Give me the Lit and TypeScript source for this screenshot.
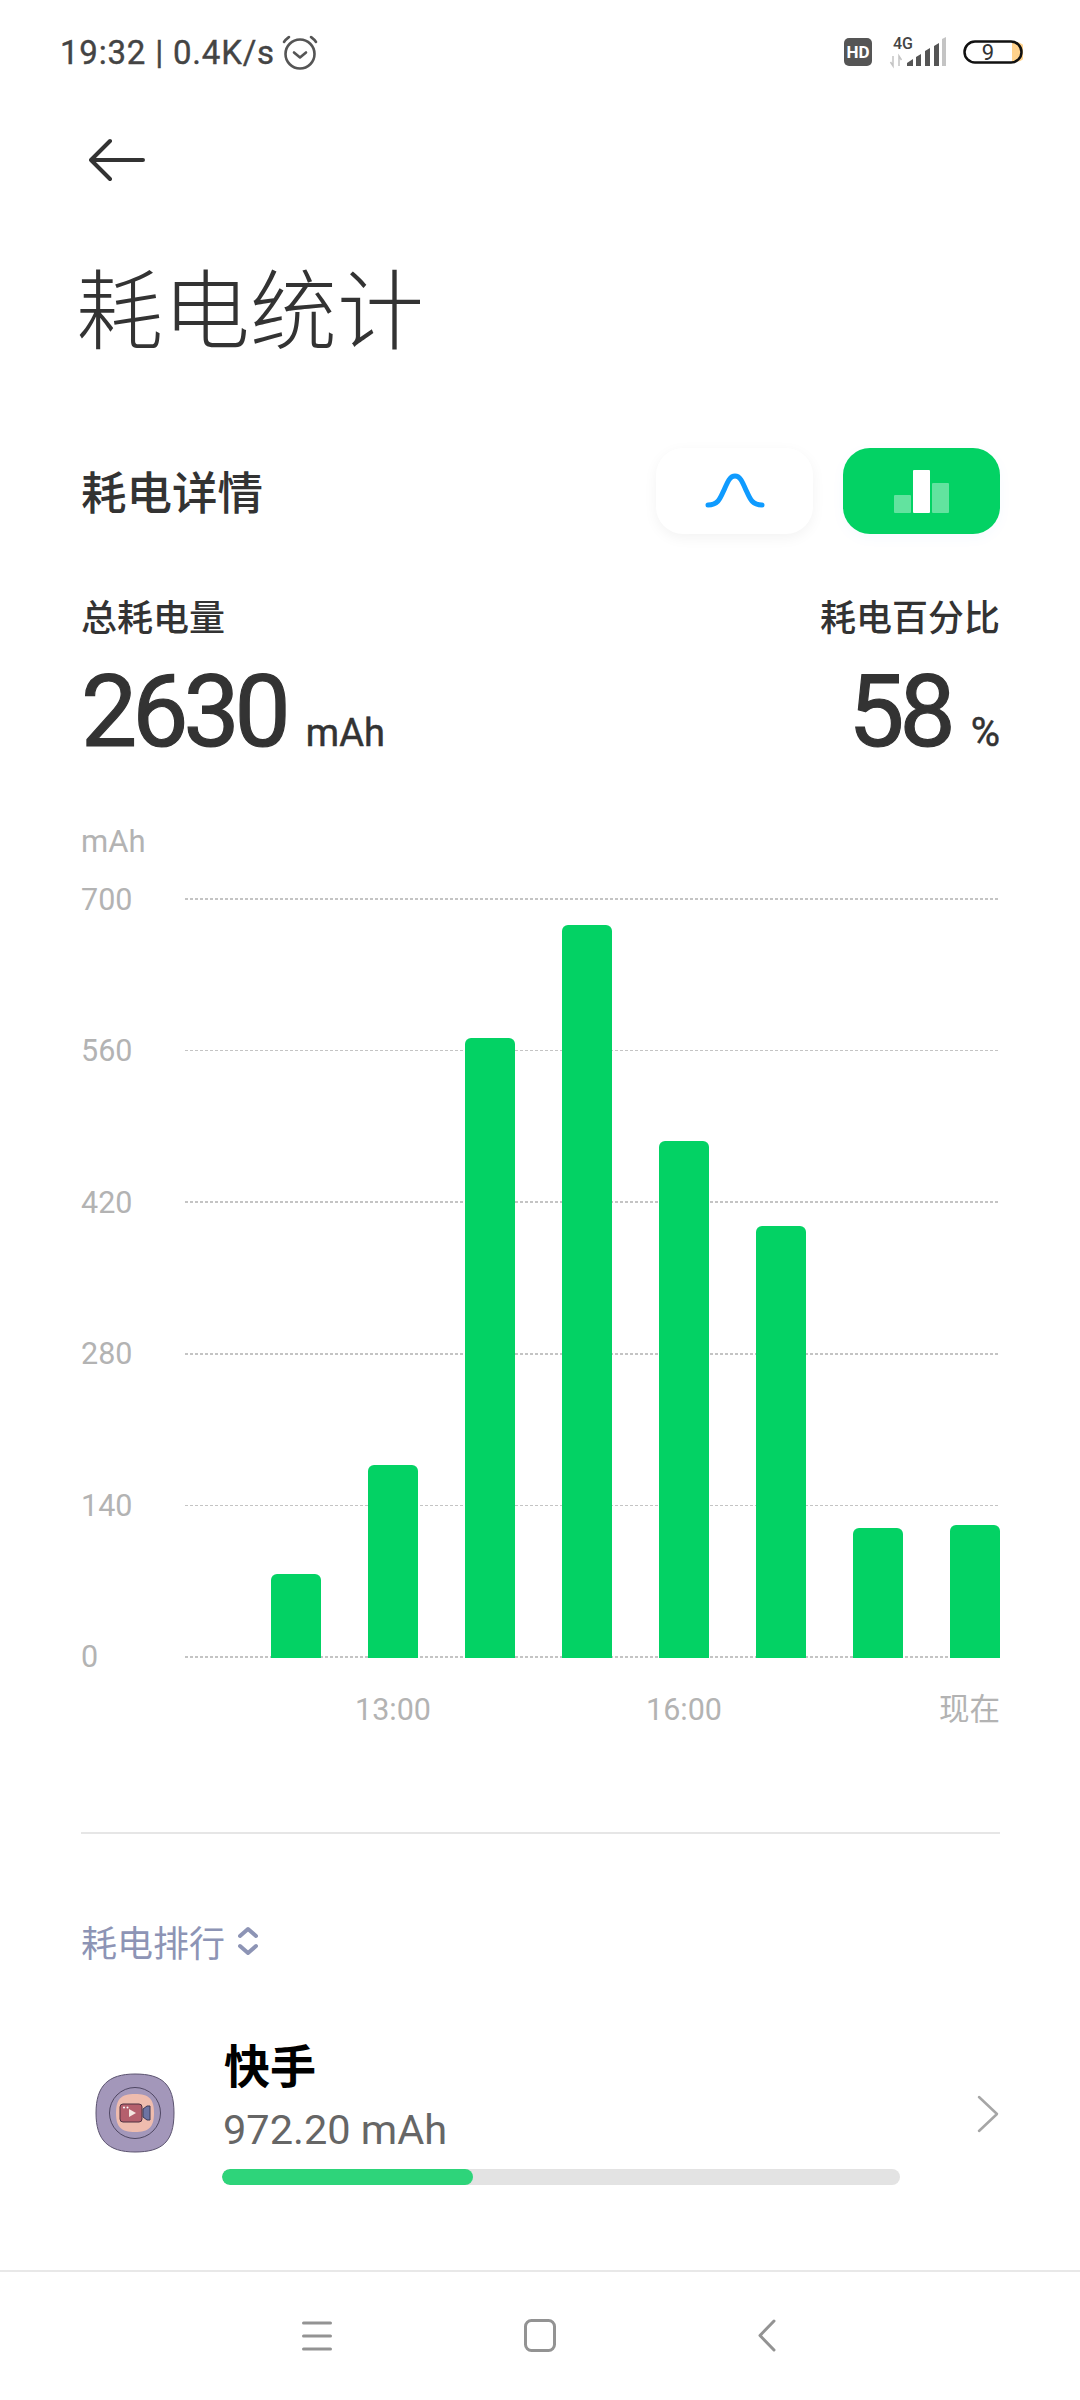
import { LitElement, html, css } from "lit";
import { customElement } from "lit/decorators.js";

const TICKS = [700, 560, 420, 280, 140, 0];
const BARS = [84, 193, 620, 733, 517, 432, 130, 133];
const LABELS = ["", "13:00", "", "", "16:00", "", "", "现在"];

@customElement("app-root")
export class AppRoot extends LitElement {
  static styles = css`
    :host {
      display: flex;
      flex-direction: column;
      height: 2400px;
      background: #fff;
      color: #333;
      font-family: Roboto, "Noto Sans CJK SC", sans-serif;
    }
    * { box-sizing: border-box; }
    svg { display: block; }
    .status {
      height: 104px;
      flex: none;
      padding: 0 57px 0 60px;
      display: flex;
      align-items: center;
      justify-content: space-between;
    }
    .status-left { display: flex; align-items: center; gap: 7px; font-size: 33px; color: #444; font-weight: 400; letter-spacing: 0.800px; -webkit-text-stroke: 0.400px #444; }
    .status-right { display: flex; align-items: center; }
    .hd { margin-right: 17px; }
    .signal { margin-right: 16px; overflow: visible; }
    .back { height: 112px; padding-left: 89px; display: flex; align-items: center; flex: none; }
    main { flex: 1; padding: 0 80px 0 81px; display: flex; flex-direction: column; min-height: 0; }
    h1 { margin: 5px 0 0 -5px; font-size: 87px; font-weight: 300; line-height: 184px; height: 184px; color: #333; }
    .head { display: flex; align-items: center; margin-top: 43px; height: 86px; }
    .head h2 { margin: 0 0 2px; flex: 1; font-size: 45.500px; font-weight: 500; color: #333; }
    .toggle { width: 157px; height: 86px; border-radius: 27px; display: flex; align-items: center; justify-content: center; }
    .toggle.line { background: #fff; box-shadow: 0 4px 14px rgba(0,0,0,.05); margin-right: 30px; }
    .toggle.bars { background: #03d264; box-shadow: 0 4px 14px rgba(3,120,255,.04); }
    .bars-icon { margin-top: 2px; }
    .stats { display: flex; justify-content: space-between; margin-top: 61px; }
    .stat { display: flex; flex-direction: column; }
    .stat.right { align-items: flex-end; }
    .stat-label { font-size: 36px; line-height: 48px; font-weight: 500; color: #333; }
    .stat-value { display: flex; align-items: baseline; gap: 20px; margin-top: 14px; height: 110px; line-height: 110px; }
    .num { font-size: 100px; font-weight: 400; letter-spacing: -5px; color: #333; -webkit-text-stroke: 1.200px #333; }
    .unit { font-size: 38px; font-weight: 400; color: #333; -webkit-text-stroke: 0.500px #333; }
    .pct { font-size: 40px; }
    .chart { margin-top: 57px; }
    .chart-unit { font-size: 31px; line-height: 36px; color: #b3b3b3; }
    .plot { position: relative; height: 798px; margin-top: 19px; display: flex; flex-direction: column; justify-content: space-between; }
    .tick { height: 40px; display: flex; align-items: center; font-size: 30.500px; color: #b3b3b3; }
    .tick span { width: 104px; flex: none; }
    .tick i { flex: 1; height: 1.500px; background: repeating-linear-gradient(90deg, #c4c4c4 0 3px, transparent 3px 5px); }
    .bars-layer { position: absolute; left: 104px; right: 0; top: 20px; bottom: 19px; display: flex; justify-content: flex-end; align-items: flex-end; gap: 47px; }
    .bar { width: 50px; background: #03d264; border-radius: 6px 6px 0 0; }
    .axis { display: flex; justify-content: flex-end; gap: 47px; margin-top: 13px; height: 40px; font-size: 30.500px; line-height: 40px; color: #b3b3b3; }
    .axis div { width: 50px; display: flex; justify-content: center; white-space: nowrap; }
    .axis div:last-child { justify-content: flex-end; }
    hr { margin: 102px 0 0; border: 0; height: 2px; background: #e6e6e6; }
    .rank-head { display: flex; align-items: center; gap: 13px; margin-top: 83px; height: 48px; font-size: 36px; color: #8d94b5; }
    .app { display: flex; margin-top: 72px; }
    .app-icon { margin: 36px 0 0 13.500px; flex: none; }
    .app-body { margin-left: 47.500px; width: 678px; }
    .app-name { font-size: 46px; font-weight: 700; color: #000; line-height: 60px; padding-left: 2px; }
    .app-val { font-size: 41.500px; color: #666; line-height: 56px; margin-top: 5px; padding-left: 1px; }
    .track { height: 16px; border-radius: 8px; background: #e3e3e3; margin-top: 11px; overflow: hidden; }
    .fill { height: 100%; border-radius: 8px; background: #2ed47a; }
    .chev { margin: 57px 0 0 auto; }
    nav { height: 130px; flex: none; border-top: 2px solid #e8e8e8; display: grid; grid-template-columns: 222px 234px 1fr; padding-left: 302px; padding-top: 47px; }
    .nav-menu { margin-top: 2px; }
  `;

  render() {
    return html`
      <div class="status">
        <div class="status-left">
          <span>19:32 | 0.4K/s</span>
          <svg width="36" height="36" viewBox="0 0 36 36" fill="none" stroke="#555">
            <circle cx="18" cy="20" r="14.500" stroke-width="2.600"/>
            <path d="M12 18.500l6 5 6-5" stroke-width="2.600" stroke-linecap="round" stroke-linejoin="round"/>
            <path d="M2 8c1.500-2.500 3-3.500 5-5M34 8c-1.500-2.500-3-3.500-5-5" stroke-width="2.600" stroke-linecap="round"/>
          </svg>
        </div>
        <div class="status-right">
          <svg class="hd" width="28" height="28" viewBox="0 0 28 28">
            <rect width="28" height="28" rx="5" fill="#555"/>
            <text x="14" y="20" text-anchor="middle" font-family="Roboto" font-weight="700" font-size="17" fill="#fff">HD</text>
          </svg>
          <svg class="signal" width="58" height="30" viewBox="0 0 58 30">
            <text x="4" y="12" font-family="Roboto" font-weight="500" font-size="16" fill="#444">4G</text>
            <path d="M4 19v10M1.500 25l2.500 4V19M10 29V19l2.500 4" stroke="#c4c4c4" stroke-width="1.500" fill="none"/>
            <path d="M18 29v-3l6-4v7zM27 29V20l5-3v12zM36 29V14l5-3v18zM45 29V9l5-3v23z" fill="#555"/>
            <path d="M53 29V2l4-2v29z" fill="#c4c4c4"/>
          </svg>
          <svg width="60" height="26" viewBox="0 0 60 26">
            <path d="M49 3h4a10 10 0 0 1 0 20h-4z" fill="#ffd28c"/>
            <rect x="1.500" y="2.500" width="57" height="21" rx="10.500" fill="none" stroke="#111" stroke-width="2.500"/>
            <text x="25" y="21" text-anchor="middle" font-family="Roboto" font-size="22" fill="#333">9</text>
          </svg>
        </div>
      </div>

      <div class="back">
        <svg width="56" height="44" viewBox="0 0 56 44" fill="none" stroke="#333" stroke-width="4" stroke-linecap="round" stroke-linejoin="round">
          <path d="M2 22h52M21 3L2 22l19 19"/>
        </svg>
      </div>

      <main>
        <h1>耗电统计</h1>

        <div class="head">
          <h2>耗电详情</h2>
          <div class="toggle line">
            <svg width="60" height="36" viewBox="0 0 60 36" fill="none">
              <path d="M3 32c10 0 12-6 16-15 4-9 6-14 11-14s7 5 11 14 6 15 16 15" stroke="#0f9bff" stroke-width="5" stroke-linecap="round"/>
            </svg>
          </div>
          <div class="toggle bars">
            <svg class="bars-icon" width="56" height="44" viewBox="0 0 56 44">
              <rect x="0" y="25" width="17" height="18" rx="1" fill="#fff" opacity=".38"/>
              <rect x="19" y="0" width="17" height="43" rx="1" fill="#fff"/>
              <rect x="38" y="13" width="17" height="30" rx="1" fill="#fff" opacity=".38"/>
            </svg>
          </div>
        </div>

        <div class="stats">
          <div class="stat">
            <div class="stat-label">总耗电量</div>
            <div class="stat-value"><span class="num">2630</span><span class="unit">mAh</span></div>
          </div>
          <div class="stat right">
            <div class="stat-label">耗电百分比</div>
            <div class="stat-value"><span class="num">58</span><span class="unit pct">%</span></div>
          </div>
        </div>

        <div class="chart">
          <div class="chart-unit">mAh</div>
          <div class="plot">
            ${TICKS.map((t) => html`<div class="tick"><span>${t}</span><i></i></div>`)}
            <div class="bars-layer">
              ${BARS.map((b) => html`<div class="bar" style="height:${b}px"></div>`)}
            </div>
          </div>
          <div class="axis">
            ${LABELS.map((l) => html`<div>${l}</div>`)}
          </div>
        </div>

        <hr />

        <div class="rank-head">
          <span>耗电排行</span>
          <svg width="20" height="30" viewBox="0 0 20 30" fill="none" stroke="#8d94b5" stroke-width="4" stroke-linecap="round" stroke-linejoin="round">
            <path d="M2 10l8-7 8 7M2 20l8 7 8-7"/>
          </svg>
        </div>

        <div class="app">
          <svg class="app-icon" width="80" height="80" viewBox="0 0 80 80">
            <path d="M40 1c27 0 39 10 39 39S67 79 40 79 1 67 1 40 13 1 40 1z" fill="#a397ba" stroke="#5c5470" stroke-width="1"/>
            <circle cx="40" cy="40" r="25.500" fill="none" stroke="#4f4763" stroke-width="1"/>
            <path d="M40 21c14 0 19 5 19 19s-5 19-19 19-19-5-19-19 5-19 19-19z" fill="#efbcae"/>
            <rect x="25" y="31" width="22" height="18" rx="3" fill="#b5606d" stroke="#4f3040" stroke-width="1"/>
            <path d="M48 36l4-3h3v14h-3l-4-3z" fill="#6d74a3" stroke="#3c3a58" stroke-width="1"/>
            <path d="M34 36l7 4-7 4z" fill="#f4e6e0"/>
            <circle cx="29" cy="34.500" r="1" fill="#fff"/><circle cx="32.500" cy="34.500" r="1" fill="#fff"/>
          </svg>
          <div class="app-body">
            <div class="app-name">快手</div>
            <div class="app-val">972.20 mAh</div>
            <div class="track"><div class="fill" style="width:${(251 / 678) * 100}%"></div></div>
          </div>
          <svg class="chev" width="24" height="40" viewBox="0 0 24 40" fill="none" stroke="#a6a6a6" stroke-width="2.500" stroke-linecap="round" stroke-linejoin="round">
            <path d="M3 3l18 17L3 37"/>
          </svg>
        </div>
      </main>

      <nav>
        <svg class="nav-menu" width="30" height="30" viewBox="0 0 30 30" stroke="#939393" stroke-width="3" stroke-linecap="round">
          <path d="M1.500 2h27M1.500 15h27M1.500 28h27"/>
        </svg>
        <svg width="32" height="33" viewBox="0 0 32 33" fill="none" stroke="#939393" stroke-width="3">
          <rect x="1.500" y="1.500" width="29" height="30" rx="6"/>
        </svg>
        <svg width="18" height="33" viewBox="0 0 18 33" fill="none" stroke="#939393" stroke-width="3" stroke-linecap="round" stroke-linejoin="round">
          <path d="M16 2L2 16.500l14 14.500"/>
        </svg>
      </nav>
    `;
  }
}
